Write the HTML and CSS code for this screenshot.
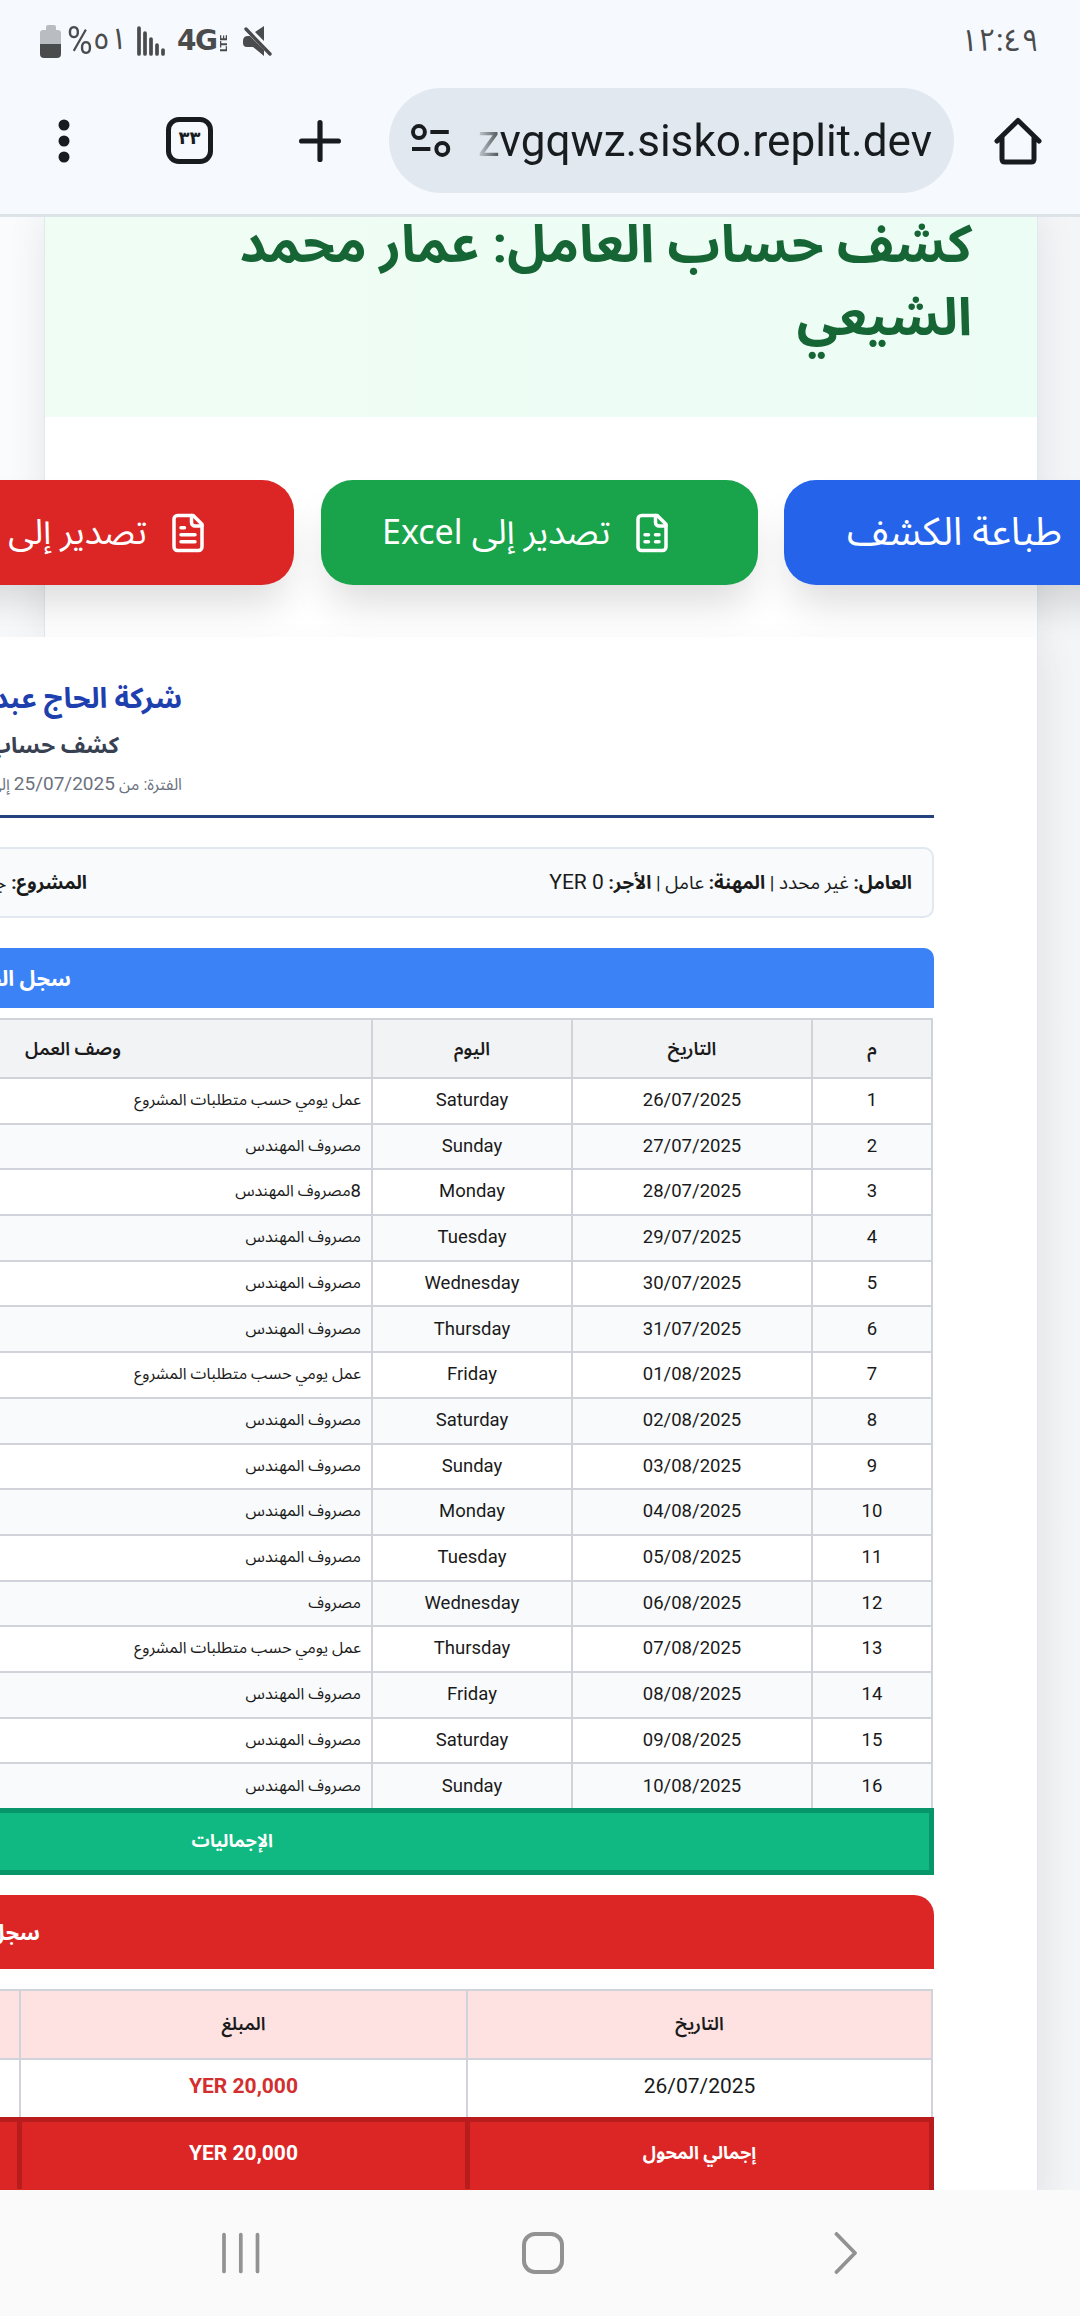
FILE: index.html
```html
<!DOCTYPE html>
<html lang="ar" dir="rtl">
<head>
<meta charset="utf-8">
<title>كشف حساب العامل</title>
<link rel="stylesheet" href="styles.css">
</head>
<body>
<div class="screen">
  <header class="chrome">
    <div class="status" dir="ltr">
      <svg class="battery" width="22" height="33" viewBox="0 0 22 33"><path d="M6 2q0-2 2-2h6q2 0 2 2v3h2q3 0 3 3v11H0V8q0-3 3-3h3z" fill="#b9bdc1"/><path d="M0 19h21v10q0 4-4 4H4q-4 0-4-4z" fill="#4a4b4c"/></svg>
      <span class="percent"><span class="sign">%</span><span class="digits">٥١</span></span>
      <svg class="signal" width="28" height="30" viewBox="0 0 28 30" stroke="#4a4b4c" stroke-width="3.7" stroke-linecap="round"><path d="M2 2v26M8 7v21M14 13v15M20 19v9M26 24v4"/></svg>
      <span class="net">4G</span><span class="lte">LTE</span>
      <svg class="mute" width="30" height="31" viewBox="0 0 30 31"><path d="M0 15q0-5 5-5h2l14 14v6L10 21H4q-4 0-4-4zM12 6l9-6v15z" fill="#4a4b4c"/><path d="M3 3l24 25" stroke="#4a4b4c" stroke-width="3.4" stroke-linecap="round"/></svg>
      <time class="clock">١٢:٤٩</time>
    </div>
    <div class="toolbar" dir="ltr">
      <svg class="dots" width="12" height="46" viewBox="0 0 12 46" fill="#181c1f"><circle cx="6" cy="7" r="5.5"/><circle cx="6" cy="23" r="5.5"/><circle cx="6" cy="39" r="5.5"/></svg>
      <span class="tabs">٣٣</span>
      <svg class="plus" width="42" height="42" viewBox="0 0 42 42" stroke="#181c1f" stroke-width="5.2" stroke-linecap="round"><path d="M21 2.6v36.8M2.6 21h36.8"/></svg>
      <div class="url">
        <svg width="40" height="34" viewBox="0 0 40 34" fill="none" stroke="#181c1f" stroke-width="4"><circle cx="8" cy="8" r="6"/><circle cx="31.500" cy="25" r="6"/><path d="M19.500 8H38M1 25h18.500"/></svg>
        <span class="host">zvgqwz.sisko.replit.dev</span>
      </div>
      <svg class="home" width="48" height="48" viewBox="0 0 48 48" fill="none" stroke="#181c1f" stroke-width="5" stroke-linecap="round" stroke-linejoin="round"><path d="M3 24L24 3.500 45 24M8 20v22q0 3 3 3h26q3 0 3-3V20"/></svg>
    </div>
  </header>

  <main class="page">
    <section class="card">
      <h1 class="title"><span>كشف حساب العامل: عمار محمد<br>الشيعي</span></h1>
      <div class="actions">
        <button class="btn blue">طباعة الكشف</button>
        <button class="btn green"><svg viewBox="0 0 24 24"><path d="M15 2H6a2 2 0 0 0-2 2v16a2 2 0 0 0 2 2h12a2 2 0 0 0 2-2V7Z"/><path d="M14 2v4a2 2 0 0 0 2 2h4M8 13h2M14 13h2M8 17h2M14 17h2"/></svg><span>تصدير إلى <bdi>Excel</bdi></span></button>
        <button class="btn red"><svg viewBox="0 0 24 24"><path d="M15 2H6a2 2 0 0 0-2 2v16a2 2 0 0 0 2 2h12a2 2 0 0 0 2-2V7Z"/><path d="M14 2v4a2 2 0 0 0 2 2h4M10 9H8M16 13H8M16 17H8"/></svg><span>تصدير إلى <bdi>PDF</bdi></span></button>
      </div>
    </section>
    <article class="report">
      <div class="heading">
        <h2>شركة الحاج عبدالرحمن</h2>
        <h3>كشف حساب العامل</h3>
        <p>الفترة: من <bdi>25/07/2025</bdi> إلى</p>
      </div>
      <div class="info">
        <span><b>العامل:</b> غير محدد | <b>المهنة:</b> عامل | <b>الأجر:</b> <bdi>YER 0</bdi></span>
        <span class="project"><b>المشروع:</b> جديد</span>
      </div>
      <div class="band work">سجل الحضور</div>
      <div class="table days">
        <div class="row head"><span>م</span><span>التاريخ</span><span>اليوم</span><span>وصف العمل</span></div>
        <div class="row"><span>1</span><span>26/07/2025</span><span>Saturday</span><span class="desc">عمل يومي حسب متطلبات المشروع</span></div>
        <div class="row"><span>2</span><span>27/07/2025</span><span>Sunday</span><span class="desc">مصروف المهندس</span></div>
        <div class="row"><span>3</span><span>28/07/2025</span><span>Monday</span><span class="desc"><bdi>8</bdi>مصروف المهندس</span></div>
        <div class="row"><span>4</span><span>29/07/2025</span><span>Tuesday</span><span class="desc">مصروف المهندس</span></div>
        <div class="row"><span>5</span><span>30/07/2025</span><span>Wednesday</span><span class="desc">مصروف المهندس</span></div>
        <div class="row"><span>6</span><span>31/07/2025</span><span>Thursday</span><span class="desc">مصروف المهندس</span></div>
        <div class="row"><span>7</span><span>01/08/2025</span><span>Friday</span><span class="desc">عمل يومي حسب متطلبات المشروع</span></div>
        <div class="row"><span>8</span><span>02/08/2025</span><span>Saturday</span><span class="desc">مصروف المهندس</span></div>
        <div class="row"><span>9</span><span>03/08/2025</span><span>Sunday</span><span class="desc">مصروف المهندس</span></div>
        <div class="row"><span>10</span><span>04/08/2025</span><span>Monday</span><span class="desc">مصروف المهندس</span></div>
        <div class="row"><span>11</span><span>05/08/2025</span><span>Tuesday</span><span class="desc">مصروف المهندس</span></div>
        <div class="row"><span>12</span><span>06/08/2025</span><span>Wednesday</span><span class="desc">مصروف</span></div>
        <div class="row"><span>13</span><span>07/08/2025</span><span>Thursday</span><span class="desc">عمل يومي حسب متطلبات المشروع</span></div>
        <div class="row"><span>14</span><span>08/08/2025</span><span>Friday</span><span class="desc">مصروف المهندس</span></div>
        <div class="row"><span>15</span><span>09/08/2025</span><span>Saturday</span><span class="desc">مصروف المهندس</span></div>
        <div class="row"><span>16</span><span>10/08/2025</span><span>Sunday</span><span class="desc">مصروف المهندس</span></div>
      </div>
      <div class="totals">الإجماليات</div>
      <div class="band transfers">سجل الحوالات</div>
      <div class="table money">
        <div class="row head"><span>التاريخ</span><span>المبلغ</span><span></span></div>
        <div class="row"><span>26/07/2025</span><span class="amount">20,000 YER</span><span></span></div>
      </div>
      <div class="sum"><span>إجمالي المحول</span><span class="num">20,000 YER</span><span></span></div>
    </article>
  </main>

  <nav class="nav" dir="ltr">
    <svg class="recents" width="38" height="42" viewBox="0 0 38 42" stroke="#929292" stroke-width="3.700" stroke-linecap="round"><path d="M2 2.500v37M18.800 2.500v37M35.500 2.500v37"/></svg>
    <svg class="round" width="42" height="42" viewBox="0 0 42 42" fill="none" stroke="#929292" stroke-width="4"><rect x="2" y="2" width="38" height="38" rx="11"/></svg>
    <svg class="back" width="24" height="42" viewBox="0 0 24 42" fill="none" stroke="#929292" stroke-width="3.800" stroke-linecap="round" stroke-linejoin="round"><path d="M2.500 2L21 21 2.500 40"/></svg>
  </nav>
</div>
</body>
</html>
```
FILE: styles.css
```css
* { box-sizing: border-box; }
body { margin: 0; font-family: Roboto, "Noto Sans Arabic", "DejaVu Sans", sans-serif; color: #1a1a1a; }
h1, h2, h3, p { margin: 0; }
.screen { width: 1080px; height: 2316px; display: flex; flex-direction: column; overflow: hidden; background: #fff; }

.chrome { height: 217px; flex: none; background: #f6f9fe; border-bottom: 3px solid #dce4e9; }
.status { height: 80px; display: flex; align-items: center; padding: 2px 42px 0 40px; color: #4a4b4c; }
.percent { width: 54px; margin-left: 4px; display: flex; align-items: center; white-space: nowrap; }
.sign { font-size: 38px; transform: scaleX(.92); }
.digits { font-size: 30px; letter-spacing: -2px; margin: -3px 0 0 -1px; }
.signal { margin-left: 17px; }
.net { margin-left: 12px; width: 42px; font: bold 28px/30px "DejaVu Sans", sans-serif; letter-spacing: -1.500px; }
.lte { width: 9px; height: 22px; font: bold 9.500px/9px "DejaVu Sans", sans-serif; writing-mode: vertical-rl; transform: rotate(180deg); }
.mute { margin-left: 15px; }
.clock { margin: 0 -1px 0 auto; font-size: 31px; letter-spacing: -3.600px; }
.toolbar { display: flex; align-items: center; height: 121px; padding: 0 38px 0 58px; }
.tabs { width: 47px; height: 47px; margin-left: 96px; border: 5px solid #181c1f; border-radius: 13px; font: 600 18px/31px Roboto, "DejaVu Sans", sans-serif; text-align: center; color: #181c1f; }
.plus { margin-left: 86px; }
.url { width: 565px; height: 105px; margin-left: 48px; padding: 0 22px; display: flex; align-items: center; border-radius: 53px; background: #e1e8f0; }
.host { margin-left: 27px; font-size: 44.100px; color: transparent; background: linear-gradient(90deg, #c5ccd4, #55595d 20px, #181c1f 24px); background-clip: text; -webkit-background-clip: text; white-space: nowrap; }
.home { margin-left: auto; }

.page { height: 1973px; flex: none; overflow: hidden; background: linear-gradient(90deg, #fafbfc, #f4f5f7); }
.card { width: 992px; height: 420px; margin-right: 43px; background: #fff; box-shadow: 0 0 0 1px #e2e8f0, 0 0 36px rgba(30, 41, 59, .1); }
.title { height: 200px; padding-right: 65px; overflow: hidden; background: linear-gradient(90deg, #f0fdf4, #ecfdf5); color: #166534; font-size: 52.300px; line-height: 73px; white-space: nowrap; }
.title span { display: block; margin-top: -9px; }
.actions { display: flex; gap: 26.500px; margin: 63px -179px 0 -500px; }
.btn { height: 105px; border: 0; border-radius: 32px; padding: 0 85px 0 62px; display: flex; align-items: center; gap: 20px; font: 35px "Noto Sans Arabic", "DejaVu Sans", sans-serif; color: #fff; white-space: nowrap; box-shadow: 0 26px 40px -8px rgba(0, 0, 0, .14); }
.btn bdi { font-size: 34px; }
.btn svg { width: 42px; height: 42px; flex: none; fill: none; stroke: #fff; stroke-width: 2; stroke-linecap: round; stroke-linejoin: round; }
.blue { width: 432px; background: #2563eb; padding-right: 154px; font-size: 39px; }
.green { width: 437px; background: #19a34a; }
.red { width: 437px; background: #dc2626; }

.report { width: 1537px; margin-right: 43px; padding: 36px 103px 0 0; background: #fff; box-shadow: 1px 0 0 #e2e4ee, 12px 12px 30px rgba(30, 41, 59, .07); }
.heading { height: 145px; border-bottom: 3px solid #24417f; padding-right: 752px; white-space: nowrap; }
h2 { font-size: 28.500px; line-height: 51px; color: #1e40af; }
h3 { font-size: 22.500px; line-height: 42px; color: #374151; padding-right: 63px; }
p { font-size: 16.300px; line-height: 35px; color: #6b7280; }
p bdi { font-size: 19px; }
.info { height: 71px; margin-top: 29px; display: flex; align-items: center; border: 2px solid #e2e8f0; border-radius: 10px; background: #f8fafc; padding-right: 20px; font-size: 18.900px; white-space: nowrap; }
.info bdi { font-size: 21px; }
.info span:first-child { width: 825px; }
.band { color: #fff; font-weight: bold; font-size: 21.500px; }
.work { height: 60px; line-height: 62px; margin-top: 30px; padding-right: 863px; background: #3b82f6; border-radius: 10px 10px 0 0; }
.table { margin-right: 1px; border-top: 2px solid #d1d3da; border-right: 2px solid #d1d3da; }
.days { margin-top: 10px; }
.row { display: grid; height: 45.690px; font-size: 18.500px; }
.row span { display: flex; align-items: center; justify-content: center; border-left: 2px solid #d1d3da; border-bottom: 2px solid #d1d3da; padding-bottom: 1.500px; white-space: nowrap; }
.days .row { grid-template-columns: 120px 240px 200px 598px 244px; }
.days .head { height: 59px; background: #f2f3f5; font-weight: 600; font-size: 18.300px; }
.row.head span { padding-bottom: 0; }
.days .row:nth-child(odd):not(.head) { background: #f8fafc; }
.days .row:last-child { height: 43.960px; }
.days .row:last-child span { border-bottom: 0; }
.row .desc { justify-content: flex-start; padding-right: 10px; font-size: 16px; }
.desc bdi { font-size: 18.500px; }
.totals { height: 67px; border: 5px solid #069669; background: #10b981; color: #fff; font-weight: bold; font-size: 18px; line-height: 55px; padding-right: 656px; }
.transfers { height: 74px; line-height: 76px; margin-top: 20px; padding-right: 894px; background: #dc2626; border-radius: 20px 20px 0 0; }
.money { margin-top: 20px; }
.money .row, .sum { display: grid; grid-template-columns: 465px 447px 520px; }
.money .row { height: 57px; font-size: 21px; }
.money .row span { padding-bottom: 5px; }
.money .head { height: 69px; background: #fee2e2; font-weight: 600; font-size: 18.300px; }
.money .row.head span { padding-bottom: 1px; }
.money .row:last-child span { border-bottom: 0; }
.money .amount { color: #d32f2f; font-weight: bold; }
.sum { grid-template-columns: 464px 448px 520px; height: 80px; border: 5px solid #b91c1c; background: #dc2626; color: #fff; font-weight: bold; font-size: 18px; }
.sum span { display: flex; align-items: center; justify-content: center; height: 67px; border-left: 5px solid #b91c1c; padding-bottom: 5px; }
.sum .num { font-size: 21px; }

.nav { height: 126px; flex: none; background: #fafafa; display: flex; align-items: center; padding-left: 222px; }
.round { margin-left: 262px; }
.back { margin-left: 270px; }
```
